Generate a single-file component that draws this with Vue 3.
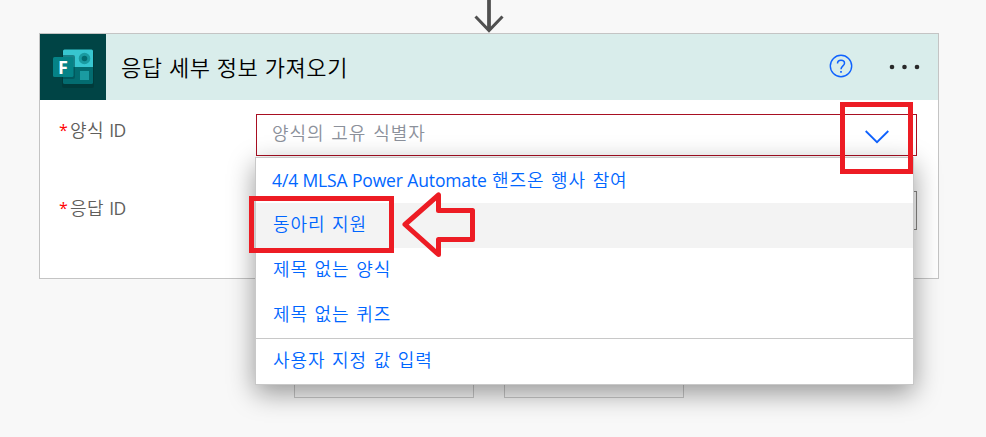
<script setup>
const options = [
  { latin: '4/4 MLSA Power Automate', label: '핸즈온 행사 참여' },
  { label: '동아리 지원', active: true },
  { label: '제목 없는 양식' },
  { label: '제목 없는 퀴즈' },
]
</script>

<template>
  <main class="canvas">
    <svg class="flow-arrow" width="30" height="33" viewBox="0 0 30 33">
      <path d="M15 0V30" stroke="#787878" stroke-width="4" />
      <path d="M15 0V30M1.500 16.500L15 30.500L28.500 16.500" fill="none" stroke="#505050" stroke-width="3" />
    </svg>

    <section class="card">
      <header class="card-header">
        <div class="app-icon">
          <svg width="66" height="66" viewBox="0 0 66 66">
            <rect x="22" y="17" width="32" height="37" rx="2" fill="#003536" opacity=".6" />
            <path d="M23 33V17Q23 15.500 24.500 15.500H51.500Q53 15.500 53 17V33Z" fill="#37c6d0" />
            <path d="M23 33H53V48.500Q53 50 51.500 50H24.500Q23 50 23 48.500Z" fill="#036c70" />
            <circle cx="44.500" cy="24.500" r="4.300" fill="#036c70" stroke="#1a9ba1" stroke-width="3" />
            <rect x="40" y="37" width="9" height="9" fill="#1a9ba1" />
            <path d="M23 21H33Q35 21 35 23V43Q35 45 33 45H23Z" fill="#004b50" opacity=".55" />
            <rect x="13" y="23" width="20.500" height="20" rx="1.600" fill="#058387" />
          </svg>
          <span class="app-letter">F</span>
        </div>
        <h1 class="title">응답 세부 정보 가져오기</h1>
        <svg class="help" width="24" height="24" viewBox="0 0 24 24" fill="none" stroke="#0f62fe">
          <circle cx="12" cy="12" r="10.700" stroke-width="1.400" />
          <path d="M8.500 9.600C8.500 7.500 10 6.300 12 6.300S15.500 7.500 15.500 9.300C15.500 11.900 12 11.900 12 15.200" stroke-width="1.500" />
          <path d="M12 17V18.700" stroke-width="1.700" />
        </svg>
        <svg class="more" width="32" height="6" viewBox="0 0 32 6" fill="#292929">
          <circle cx="3" cy="3" r="2.300" /><circle cx="15.500" cy="3" r="2.300" /><circle cx="28" cy="3" r="2.300" />
        </svg>
      </header>

      <div class="fields">
        <div class="field">
          <label class="label"><span class="required">*</span>양식<span class="id">ID</span></label>
          <div class="input invalid">
            <span class="placeholder">양식의 고유 식별자</span>
            <svg class="chevron" width="24" height="14" viewBox="0 0 24 14" fill="none" stroke="#0f62fe" stroke-width="1.800">
              <path d="M.7 1L12 12.200L23.300 1" />
            </svg>
            <div class="menu">
              <div
                v-for="option in options"
                :key="option.label"
                class="option"
                :class="{ active: option.active, mixed: option.latin }"
              ><span v-if="option.latin" class="latin">{{ option.latin }}</span>{{ option.label }}</div>
              <div class="option custom">사용자 지정 값 입력</div>
            </div>
          </div>
        </div>
        <div class="field second">
          <label class="label"><span class="required">*</span>응답<span class="id">ID</span></label>
          <div class="input"></div>
        </div>
      </div>
    </section>

    <div class="actions">
      <div class="action"></div>
      <div class="action"></div>
    </div>

    <div class="mark mark-chevron"></div>
    <div class="mark mark-option"></div>
    <svg class="mark-arrow" width="76" height="70" viewBox="0 0 76 70">
      <path d="M4 34.500L37.500 5V20.500H71.500V49.500H37.500V64.500Z" fill="none" stroke="#ed1c24" stroke-width="5" stroke-linejoin="round" />
    </svg>
  </main>
</template>

<style>
body {
  margin: 0;
  background: #f8f8f8;
}
</style>

<style scoped>
.canvas {
  position: relative;
  box-sizing: border-box;
  width: 986px;
  height: 437px;
  overflow: hidden;
  background: #f8f8f8;
  font-family: 'Open Sans', 'Noto Sans CJK KR', sans-serif;
  font-weight: 350;
}
.flow-arrow {
  display: block;
  margin-left: 474px;
}
.card {
  position: relative;
  z-index: 1;
  box-sizing: border-box;
  width: 900px;
  height: 246px;
  margin-left: 39px;
  border: 1px solid #c4c4c4;
  background: #fff;
}
.card-header {
  display: flex;
  align-items: center;
  height: 66px;
  padding-right: 17px;
  background: #d9edeb;
}
.app-icon {
  position: relative;
  width: 66px;
  height: 66px;
  background: #004445;
}
.app-icon svg {
  display: block;
}
.app-letter {
  position: absolute;
  left: 13px;
  top: 23px;
  width: 20px;
  color: #fff;
  font-size: 18px;
  font-weight: 700;
  line-height: 20px;
  text-align: center;
}
.title {
  flex: 1;
  margin: 0 0 0 15px;
  padding-bottom: 2px;
  color: #000;
  font-family: 'Noto Sans CJK KR', sans-serif;
  font-size: 22px;
  font-weight: 350;
  line-height: 32px;
  letter-spacing: 0.6px;
  word-spacing: 0.7px;
  white-space: nowrap;
}
.help {
  margin-bottom: 2px;
}
.more {
  margin-left: 36px;
}
.fields {
  padding: 14px 21px 0 19px;
}
.field {
  display: flex;
  align-items: flex-start;
  justify-content: space-between;
}
.second {
  margin-top: 35px;
}
.label {
  display: flex;
  color: #605e5c;
  font-size: 18px;
  line-height: 33px;
  letter-spacing: 0.5px;
  white-space: nowrap;
}
.second .label {
  line-height: 34px;
}
.required {
  width: 11px;
  color: #f00;
  font-size: 16px;
  font-weight: 400;
  letter-spacing: 0;
}
.id {
  margin-left: 5px;
  font-size: 17.5px;
  font-weight: 400;
  letter-spacing: -0.4px;
}
.input {
  position: relative;
  display: flex;
  align-items: center;
  justify-content: space-between;
  box-sizing: border-box;
  width: 661px;
  height: 39px;
  border: 1px solid #8a8886;
}
.invalid {
  height: 42px;
  padding: 0 27px 0 15px;
  border-color: #a80f22;
}
.placeholder {
  padding-bottom: 4px;
  color: #8c919b;
  font-size: 18px;
  line-height: 26px;
  letter-spacing: 0.9px;
  word-spacing: 1.4px;
}
.chevron {
  margin-top: 3px;
}
.menu {
  position: absolute;
  z-index: 2;
  left: -2px;
  top: 42px;
  box-sizing: border-box;
  width: 659px;
  border: 1px solid #c8c8c8;
  background: #fff;
  box-shadow: 0 8px 25px rgba(0, 0, 0, 0.4);
}
.option {
  box-sizing: border-box;
  height: 45px;
  padding-left: 17px;
  color: #0066ff;
  font-size: 18px;
  line-height: 43px;
  letter-spacing: 0.9px;
  word-spacing: 1.1px;
  white-space: nowrap;
}
.mixed {
  display: flex;
  gap: 5px;
  padding-left: 16px;
  line-height: 44px;
}
.latin {
  width: 215px;
  font-size: 17.5px;
  font-weight: 400;
  letter-spacing: -0.13px;
  word-spacing: 0;
}
.active {
  background: #f3f3f3;
}
.custom {
  height: 46px;
  border-top: 1px solid #c8c8c8;
  line-height: 43px;
}
.actions {
  display: flex;
  gap: 30px;
  margin: 78px 0 0 294px;
}
.action {
  box-sizing: border-box;
  width: 180px;
  height: 41px;
  border: 1px solid #c8c8c8;
}
.mark {
  position: absolute;
  z-index: 3;
  box-sizing: border-box;
  border: 5px solid #ed1c24;
}
.mark-chevron {
  left: 840px;
  top: 102px;
  width: 73px;
  height: 72px;
}
.mark-option {
  left: 249px;
  top: 196px;
  width: 145px;
  height: 57px;
}
.mark-arrow {
  position: absolute;
  z-index: 3;
  left: 401px;
  top: 190px;
}
</style>
